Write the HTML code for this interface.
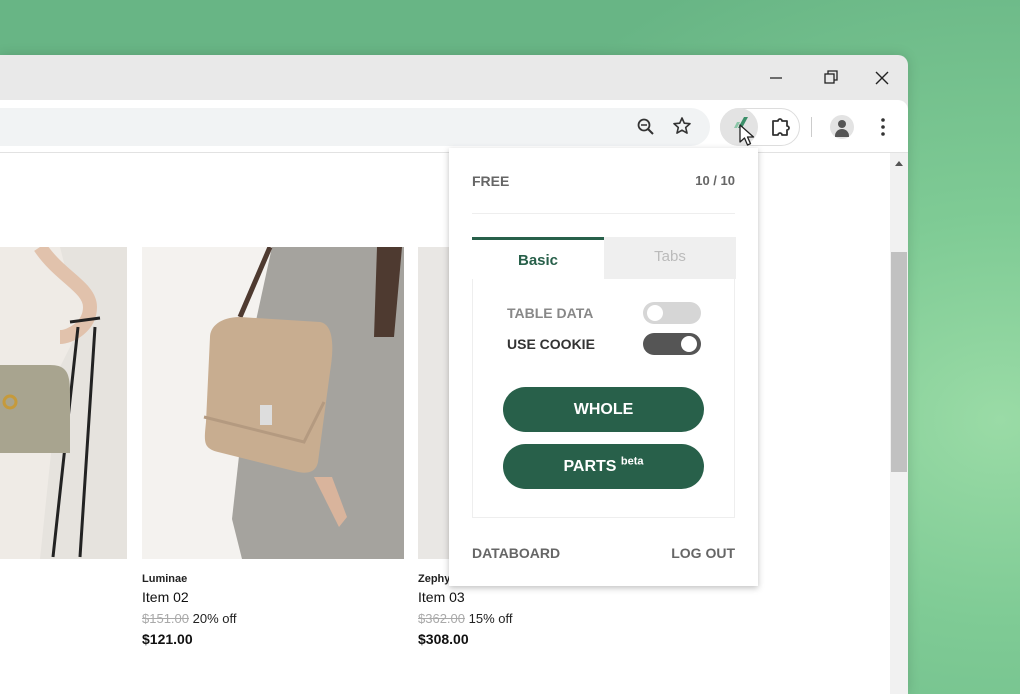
<!DOCTYPE html>
<html><head><style>
*{margin:0;padding:0;box-sizing:border-box}
body{width:1020px;height:694px;overflow:hidden;position:relative;font-family:"Liberation Sans",Arial,sans-serif;
background:radial-gradient(ellipse 600px 500px at 1000px 420px,#9adba6 0%,#7fcb95 40%,#68b585 100%),#68b585;}
.win{position:absolute;left:0;top:55px;width:908px;height:639px;background:#e9e9e9;border-top-right-radius:10px;overflow:hidden;box-shadow:0 0 12px rgba(0,0,0,.15)}
.tb{position:absolute;left:0;top:45px;width:908px;height:53px;background:#fff;border-top-right-radius:10px;border-bottom:1px solid #e2e2e2}
.omni{position:absolute;left:-20px;top:8px;width:730px;height:38px;background:#f1f3f4;border-radius:19px}
.content{position:absolute;left:0;top:98px;width:908px;height:541px;background:#fff;overflow:hidden}
.sb{position:absolute;left:890px;top:0;width:18px;height:600px;background:#f1f1f1}
.thumb{position:absolute;left:891px;top:99px;width:16px;height:220px;background:#c1c1c1}
.pop{position:absolute;left:449px;top:148px;width:309px;height:438px;background:#fff;box-shadow:0 2px 6px rgba(0,0,0,.25);}
.g{color:#666;font-size:14px;position:absolute;font-weight:bold}
.tog{position:absolute;width:58px;height:22px;border-radius:11px}
.tog i{position:absolute;top:3px;width:16px;height:16px;border-radius:50%;background:#fff}
.btn{position:absolute;left:54px;width:201px;height:45px;border-radius:23px;background:#28604a;color:#fff;font-weight:bold;font-size:16px;text-align:center;line-height:45px;font-family:"Liberation Sans",Arial,sans-serif}
.pt{font-family:"Liberation Sans",Arial,sans-serif;position:absolute;color:#111}
</style></head><body>
<div class="win">
  <svg style="position:absolute;left:770px;top:14px" width="125" height="20">
    <line x1="0" y1="9" x2="12" y2="9" stroke="#222" stroke-width="1.3"/>
    <rect x="55" y="5" width="9" height="9" fill="none" stroke="#222" stroke-width="1.3"/>
    <path d="M58 5V2h9v9h-3" fill="none" stroke="#222" stroke-width="1.3"/>
    <path d="M106 3l12 12M118 3l-12 12" stroke="#222" stroke-width="1.4"/>
  </svg>
  <div class="tb">
    <div class="omni"></div>
    <svg style="position:absolute;left:636px;top:17px" width="20" height="20"><circle cx="8" cy="8" r="5.5" fill="none" stroke="#333" stroke-width="1.8"/><line x1="12" y1="12" x2="17" y2="17" stroke="#333" stroke-width="2"/><line x1="5" y1="8" x2="11" y2="8" stroke="#333" stroke-width="1.6"/></svg>
    <svg style="position:absolute;left:672px;top:16px" width="20" height="20"><path d="M10 2l2.3 5.2 5.7.5-4.3 3.8 1.3 5.6L10 14.2 5 17.1l1.3-5.6L2 7.7l5.7-.5z" fill="none" stroke="#333" stroke-width="1.6" stroke-linejoin="round"/></svg>
    <div style="position:absolute;left:720px;top:8px;width:80px;height:38px;border:1px solid #ddd;border-radius:19px"></div>
    <div style="position:absolute;left:720px;top:8px;width:38px;height:38px;border-radius:50%;background:#e3e3e3"></div>
    <svg style="position:absolute;left:730px;top:14px" width="20" height="24"><path d="M8 14L14 3h4L12 14z" fill="#3b8f69"/><path d="M4 14l3-6h3l-3 6z" fill="#8bc6a8"/></svg>
    <svg style="position:absolute;left:738px;top:23px" width="22" height="28"><path d="M2 2v17l4.5-4 3 7 3-1.3-3-6.7h6z" fill="#fff" stroke="#222" stroke-width="1.3" stroke-linejoin="round"/></svg>
    <svg style="position:absolute;left:770px;top:16px" width="22" height="22"><path d="M3 5h5a2 2 0 014 0h5v5a2 2 0 010 4v5H12a2 2 0 00-4 0H3z" fill="none" stroke="#333" stroke-width="1.8" stroke-linejoin="round"/></svg>
    <div style="position:absolute;left:811px;top:17px;width:1px;height:20px;background:#ccc"></div>
    <div style="position:absolute;left:830px;top:15px;width:24px;height:24px;border-radius:50%;background:#e3e3e3;overflow:hidden"><div style="position:absolute;left:8px;top:5px;width:8px;height:8px;border-radius:50%;background:#555"></div><div style="position:absolute;left:5px;top:14px;width:14px;height:8px;border-radius:7px 7px 0 0;background:#555"></div></div>
    <svg style="position:absolute;left:880px;top:17px" width="6" height="20"><circle cx="3" cy="3" r="1.8" fill="#333"/><circle cx="3" cy="10" r="1.8" fill="#333"/><circle cx="3" cy="17" r="1.8" fill="#333"/></svg>
  </div>
  <div class="content">
    <div class="sb"></div><div class="thumb"></div>
    <svg style="position:absolute;left:894px;top:7px" width="10" height="8"><path d="M1 6h8L5 1z" fill="#555"/></svg>
    <svg style="position:absolute;left:0;top:94px" width="127" height="312">
      <rect width="127" height="312" fill="#e6e3de"/>
      <path d="M0 0h60l10 40 20 20-30 60-20 192H0z" fill="#efebe6"/>
      <path d="M40 0c20 30 50 40 50 60s-20 30-30 30" fill="none" stroke="#e1c2ac" stroke-width="14"/>
      <path d="M70 75l30-4M78 80l-25 230M95 80l-15 230" stroke="#222" stroke-width="3"/>
      <path d="M0 118h50c18 0 20 10 20 30v58H0z" fill="#a8a48f"/>
      <circle cx="10" cy="155" r="6" fill="none" stroke="#c59a3c" stroke-width="3"/>
    </svg>
    <svg style="position:absolute;left:142px;top:94px" width="262" height="312">
      <rect width="262" height="312" fill="#f4f2ef"/>
      <path d="M130 0h110l22 0v312H100l-10-40 20-180z" fill="#a5a39e"/>
      <path d="M235 0h25l-8 90h-20z" fill="#4e3a30"/>
      <path d="M128 0l-30 70" stroke="#4e3a30" stroke-width="5"/>
      <path d="M68 90c0-10 10-20 30-20l80 5c12 2 15 20 10 50l-12 90c-2 10-10 12-20 10l-80-20c-15-4-14-10-12-30z" fill="#c8ad90"/>
      <path d="M62 170l100 25 20-40" fill="none" stroke="#b49a80" stroke-width="3"/>
      <rect x="118" y="158" width="12" height="20" fill="#ddd"/>
      <path d="M172 230c10 20 20 40 25 50l8-10-15-40z" fill="#d9b49c"/>
    </svg>
    <svg style="position:absolute;left:418px;top:94px" width="40" height="312"><rect width="40" height="312" fill="#e9e7e4"/></svg>
    <div class="pt" style="left:142px;top:420px;font-size:11px;font-weight:bold;color:#222">Luminae</div>
    <div class="pt" style="left:142px;top:436px;font-size:14px">Item 02</div>
    <div class="pt" style="left:142px;top:458px;font-size:13px"><s style="color:#aaa">$151.00</s> <span style="color:#222">20% off</span></div>
    <div class="pt" style="left:142px;top:478px;font-size:14px;font-weight:bold">$121.00</div>
    <div class="pt" style="left:418px;top:420px;font-size:11px;font-weight:bold;color:#222">Zephy</div>
    <div class="pt" style="left:418px;top:436px;font-size:14px">Item 03</div>
    <div class="pt" style="left:418px;top:458px;font-size:13px"><s style="color:#aaa">$362.00</s> <span style="color:#222">15% off</span></div>
    <div class="pt" style="left:418px;top:478px;font-size:14px;font-weight:bold">$308.00</div>
  </div>
</div>
<div class="pop">
  <div class="g" style="left:23px;top:25px">FREE</div>
  <div class="g" style="right:23px;top:25px;font-size:13px">10 / 10</div>
  <div style="position:absolute;left:23px;top:65px;width:263px;height:1px;background:#eee"></div>
  <div style="position:absolute;left:23px;top:89px;width:263px;height:281px;border:1px solid #eee">
    <div style="position:absolute;left:-1px;top:-1px;width:132px;height:42px;border-top:3px solid #28604a;background:#fff;color:#28604a;font-weight:bold;font-size:15px;text-align:center;line-height:42px">Basic</div>
    <div style="position:absolute;left:131px;top:-1px;width:132px;height:42px;background:#efefef;color:#bbb;font-size:15px;text-align:center;line-height:40px">Tabs</div>
    <div class="g" style="left:34px;top:67px;color:#888">TABLE DATA</div>
    <div class="g" style="left:34px;top:98px;color:#333">USE COOKIE</div>
    <div class="tog" style="left:170px;top:64px;background:#d6d6d6"><i style="left:4px"></i></div>
    <div class="tog" style="left:170px;top:95px;background:#555"><i style="left:38px"></i></div>
    <div class="btn" style="left:30px;top:149px">WHOLE</div>
    <div class="btn" style="left:30px;top:206px">PARTS <sup style="font-size:11px;line-height:0">beta</sup></div>
  </div>
  <div class="g" style="left:23px;top:397px">DATABOARD</div>
  <div class="g" style="right:23px;top:397px">LOG OUT</div>
</div>
</body></html>
